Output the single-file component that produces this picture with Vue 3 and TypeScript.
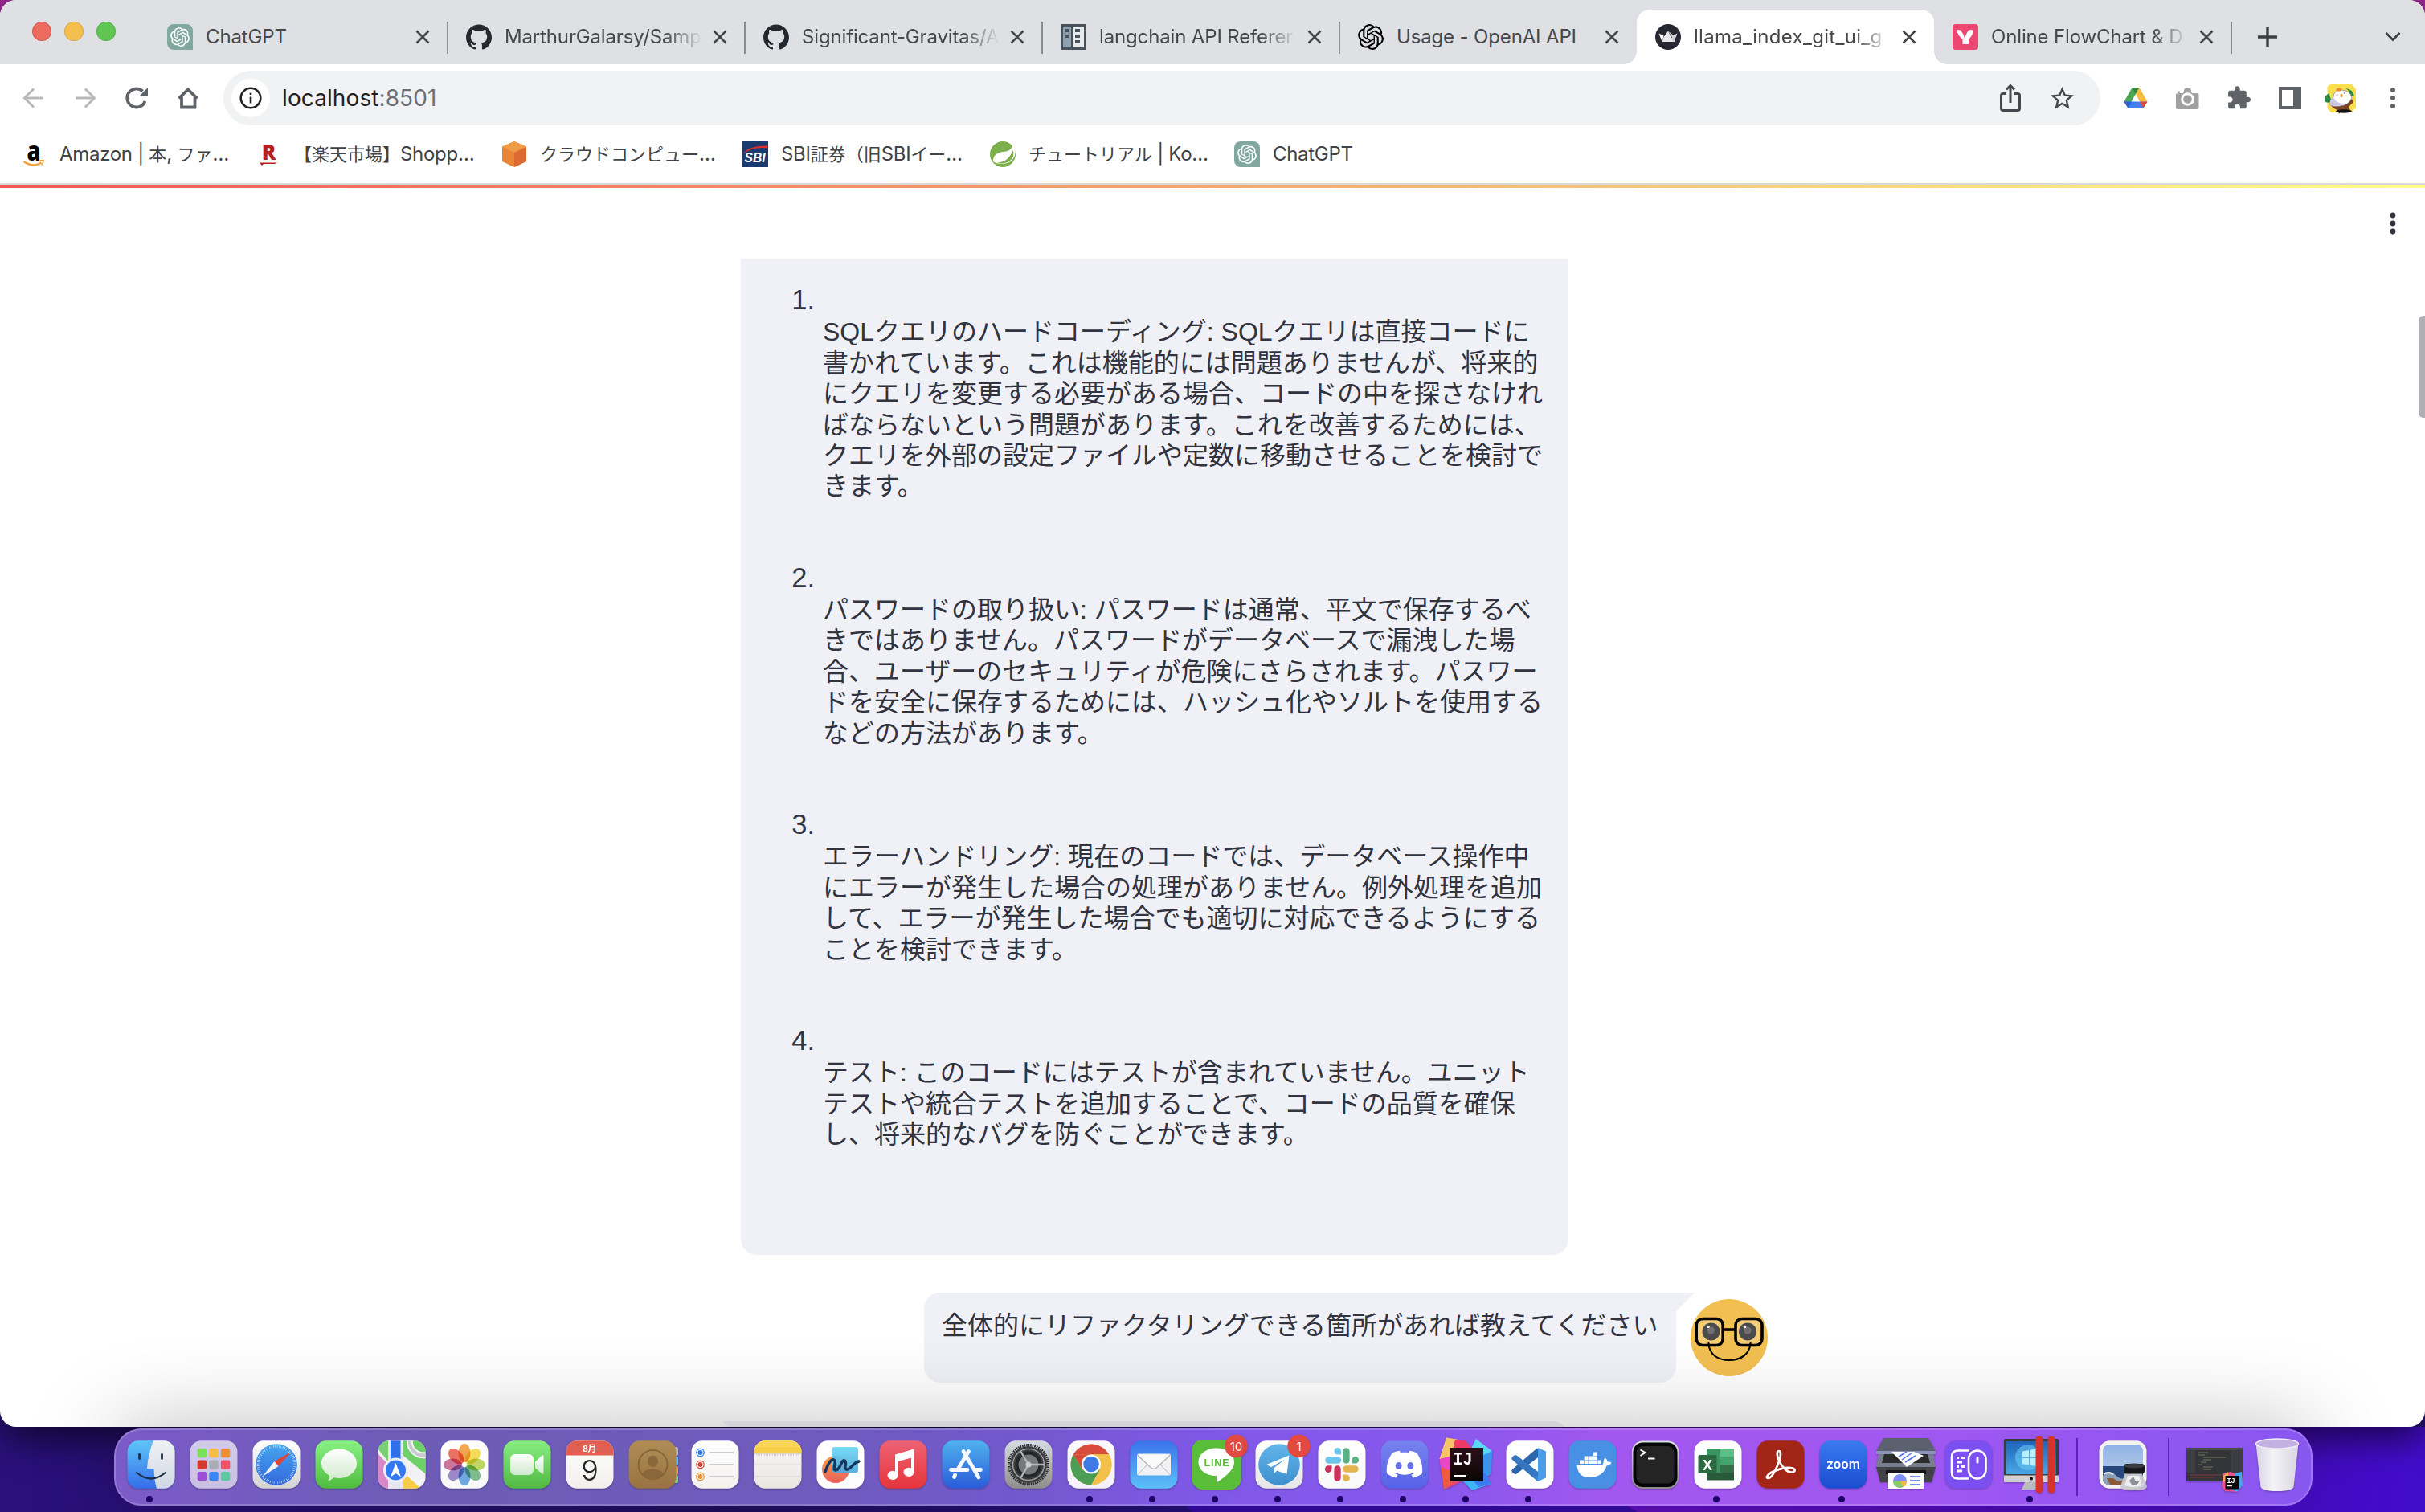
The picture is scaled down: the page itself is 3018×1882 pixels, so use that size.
<script setup lang="ts">
interface Tab {
  title: string
  icon: string
  active?: boolean
  divider?: boolean
  fade?: boolean
  spacing?: string
}
interface LabelPart {
  text: string
  jp?: boolean
}
interface Bookmark {
  icon: string
  parts: LabelPart[]
  width: number
}
interface DockItem {
  name: string
  art: string
  running?: boolean
}

const openai =
  'M22.2819 9.8211a5.9847 5.9847 0 0 0-.5157-4.9108 6.0462 6.0462 0 0 0-6.5098-2.9A6.0651 6.0651 0 0 0 4.9807 4.1818a5.9847 5.9847 0 0 0-3.9977 2.9 6.0462 6.0462 0 0 0 .7427 7.0966 5.98 5.98 0 0 0 .511 4.9107 6.051 6.051 0 0 0 6.5146 2.9001A5.9847 5.9847 0 0 0 13.2599 24a6.0557 6.0557 0 0 0 5.7718-4.2058 5.9894 5.9894 0 0 0 3.9977-2.9001 6.0557 6.0557 0 0 0-.7475-7.0729zm-9.022 12.6081a4.4755 4.4755 0 0 1-2.8764-1.0408l.1419-.0804 4.7783-2.7582a.7948.7948 0 0 0 .3927-.6813v-6.7369l2.02 1.1686a.071.071 0 0 1 .038.052v5.5826a4.504 4.504 0 0 1-4.4945 4.4944zm-9.6607-4.1254a4.4708 4.4708 0 0 1-.5346-3.0137l.142.0852 4.783 2.7582a.7712.7712 0 0 0 .7806 0l5.8428-3.3685v2.3324a.0804.0804 0 0 1-.0332.0615L9.74 19.9502a4.4992 4.4992 0 0 1-6.1408-1.6464zM2.3408 7.8956a4.485 4.485 0 0 1 2.3655-1.9728V11.6a.7664.7664 0 0 0 .3879.6765l5.8144 3.3543-2.0201 1.1685a.0757.0757 0 0 1-.071 0l-4.8303-2.7865A4.504 4.504 0 0 1 2.3408 7.872zm16.5963 3.8558L13.1038 8.364 15.1192 7.2a.0757.0757 0 0 1 .071 0l4.8303 2.7913a4.4944 4.4944 0 0 1-.6765 8.1042v-5.6772a.79.79 0 0 0-.407-.667zm2.0107-3.0231l-.142-.0852-4.7735-2.7818a.7759.7759 0 0 0-.7854 0L9.409 9.2297V6.8974a.0662.0662 0 0 1 .0284-.0615l4.8303-2.7866a4.4992 4.4992 0 0 1 6.6802 4.66zM8.3065 12.863l-2.02-1.1638a.0804.0804 0 0 1-.038-.0567V6.0742a4.4992 4.4992 0 0 1 7.3757-3.4537l-.142.0805L8.704 5.459a.7948.7948 0 0 0-.3927.6813zm1.0976-2.3654l2.602-1.4998 2.6069 1.4998v2.9994l-2.5974 1.4997-2.6067-1.4997Z'
const octocat =
  'M12 .297c-6.63 0-12 5.373-12 12 0 5.303 3.438 9.8 8.205 11.385.6.113.82-.258.82-.577 0-.285-.01-1.04-.015-2.04-3.338.724-4.042-1.61-4.042-1.61C4.422 18.07 3.633 17.7 3.633 17.7c-1.087-.744.084-.729.084-.729 1.205.084 1.838 1.236 1.838 1.236 1.07 1.835 2.809 1.305 3.495.998.108-.776.417-1.305.76-1.605-2.665-.3-5.466-1.332-5.466-5.93 0-1.31.465-2.38 1.235-3.22-.135-.303-.54-1.523.105-3.176 0 0 1.005-.322 3.3 1.23.96-.267 1.98-.399 3-.405 1.02.006 2.04.138 3 .405 2.28-1.552 3.285-1.23 3.285-1.23.645 1.653.24 2.873.12 3.176.765.84 1.23 1.91 1.23 3.22 0 4.61-2.805 5.625-5.475 5.92.42.36.81 1.096.81 2.22 0 1.606-.015 2.896-.015 3.286 0 .315.21.69.825.57C20.565 22.092 24 17.592 24 12.297c0-6.627-5.373-12-12-12'
const discord =
  'M20.317 4.3698a19.7913 19.7913 0 00-4.8851-1.5152.0741.0741 0 00-.0785.0371c-.211.3753-.4447.8648-.6083 1.2495-1.8447-.2762-3.68-.2762-5.4868 0-.1636-.3933-.4058-.8742-.6177-1.2495a.077.077 0 00-.0785-.037 19.7363 19.7363 0 00-4.8852 1.515.0699.0699 0 00-.0321.0277C.5334 9.0458-.319 13.5799.0992 18.0578a.0824.0824 0 00.0312.0561c2.0528 1.5076 4.0413 2.4228 5.9929 3.0294a.0777.0777 0 00.0842-.0276c.4616-.6304.8731-1.2952 1.226-1.9942a.076.076 0 00-.0416-.1057c-.6528-.2476-1.2743-.5495-1.8722-.8923a.077.077 0 01-.0076-.1277c.1258-.0943.2517-.1923.3718-.2914a.0743.0743 0 01.0776-.0105c3.9278 1.7933 8.18 1.7933 12.0614 0a.0739.0739 0 01.0785.0095c.1202.099.246.1981.3728.2924a.077.077 0 01-.0066.1276 12.2986 12.2986 0 01-1.873.8914.0766.0766 0 00-.0407.1067c.3604.698.7719 1.3628 1.225 1.9932a.076.076 0 00.0842.0286c1.961-.6067 3.9495-1.5219 6.0023-3.0294a.077.077 0 00.0313-.0552c.5004-5.177-.8382-9.6739-3.5485-13.6604a.061.061 0 00-.0312-.0286zM8.02 15.3312c-1.1825 0-2.1569-1.0857-2.1569-2.419 0-1.3332.9555-2.4189 2.157-2.4189 1.2108 0 2.1757 1.0952 2.1568 2.419 0 1.3332-.9555 2.4189-2.1569 2.4189zm7.9748 0c-1.1825 0-2.1569-1.0857-2.1569-2.419 0-1.3332.9554-2.4189 2.1569-2.4189 1.2108 0 2.1757 1.0952 2.1568 2.419 0 1.3332-.946 2.4189-2.1568 2.4189Z'

/* 32 x 32 site icons */
const chatgptIcon = `<path d="M8 0H24a8 8 0 0 1 8 8V32H8a8 8 0 0 1-8-8V8a8 8 0 0 1 8-8Z" fill="#80a89d"/><g transform="translate(4 4)"><path d="${openai}" fill="#fff"/></g>`
const githubIcon = `<g transform="scale(1.3333)"><path d="${octocat}" fill="#24292f"/></g>`
const site: Record<string, string> = {
  chatgpt: chatgptIcon,
  github: githubIcon,
  docs: `<rect width="32" height="32" fill="#47525d"/><rect x="3" y="3" width="10" height="26" fill="#8fa0ae"/><rect x="15" y="3" width="14" height="26" fill="#e6eaed"/><g fill="#47525d"><rect x="6" y="6" width="4" height="4"/><rect x="6" y="13" width="4" height="4"/><rect x="18" y="6" width="6" height="4"/><rect x="18" y="13" width="6" height="4"/><rect x="18" y="20" width="6" height="4"/></g>`,
  openai: `<g transform="scale(1.3333)"><path d="${openai}" fill="#000"/></g>`,
  streamlit: `<circle cx="16" cy="16" r="16" fill="#262730"/><path d="M4.500 11.500l6 3L8.500 22z" fill="#fff"/><path d="M27.500 11.500l-6 3L23.500 22z" fill="#d8d8d8"/><path d="M16 8.500l5 8L7.500 22h17L22 13.500z" fill="#cfcfd2"/><path d="M16 8.500L10.500 16l-2 6H22z" fill="#e8e8ea"/>`,
  flow: `<rect width="32" height="32" rx="4" fill="#ec4770"/><path d="M5.500 7.500q3.500-1.500 5.500 1.500 3 3.500 4 9 1.500-5 4-9 2.500-3 6.500-1.500.5 6-5.500 11.500V25h-7.500v-6.500Q6 14 5.500 7.500z" fill="#fff"/>`,
  amazon: `<text x="16" y="23.500" text-anchor="middle" font-family="Open Sans, sans-serif" font-weight="800" font-size="34" textLength="17" lengthAdjust="spacingAndGlyphs" fill="#000">a</text><path d="M3.500 25q11 8 22 1.500" fill="none" stroke="#f2a23a" stroke-width="2.400"/><path d="M22 23.800h6q0 3.500-2.500 5.500" fill="none" stroke="#f2a23a" stroke-width="1.600"/>`,
  rakuten: `<text x="16.500" y="23" text-anchor="middle" font-family="Open Sans, sans-serif" font-weight="800" font-size="26" fill="#b5201c">R</text><path d="M5 26.500H27L24 28H10l-2 2z" fill="#b5201c"/>`,
  aws: `<path d="M16 0L31 6.500V25L16 32 1 25V6.500z" fill="#ea8536"/><path d="M16 0L31 6.500 16 14 1 6.500z" fill="#f09c45"/><path d="M16 14L31 6.500V25L16 32z" fill="#dd6a32"/>`,
  sbi: `<rect width="32" height="32" fill="#1b3a6f"/><path d="M2 14Q10 5 31 5.500v3Q14 6.500 2 15z" fill="#d9302c"/><text x="15.500" y="25.500" text-anchor="middle" font-family="Liberation Sans, sans-serif" font-weight="700" font-style="italic" font-size="16" textLength="26" lengthAdjust="spacingAndGlyphs" fill="#fff">SBI</text>`,
  spring: `<ellipse cx="16" cy="16" rx="16" ry="16" fill="#7db04b"/><path d="M31 6q3 14-7 20-9 4-19 0Q3 24 5 19 9 13.500 17 13q9-1 12-8z" fill="#fff"/><path d="M29 11q2 9-5 14-7 4-15 1.500 8-.5 13-5Q26 17.500 29 11z" fill="#7db04b"/><path d="M29 0q3 4 3 9l-2-3z" fill="#fff"/>`
}

const tabs: Tab[] = [
  { title: 'ChatGPT', icon: 'chatgpt', divider: true },
  { title: 'MarthurGalarsy/Samp', icon: 'github', divider: true, fade: true },
  { title: 'Significant-Gravitas/A', icon: 'github', divider: true, fade: true },
  { title: 'langchain API Referer', icon: 'docs', divider: true, fade: true },
  { title: 'Usage - OpenAI API', icon: 'openai' },
  { title: 'llama_index_git_ui_g', icon: 'streamlit', active: true, fade: true, spacing: '0.3px' },
  { title: 'Online FlowChart & D', icon: 'flow', divider: true, fade: true }
]

const bookmarks: Bookmark[] = [
  { icon: 'amazon', width: 292, parts: [{ text: 'Amazon | ' }, { text: '本', jp: true }, { text: ', ' }, { text: 'ファ', jp: true }, { text: '…' }] },
  { icon: 'rakuten', width: 306, parts: [{ text: '【楽天市場】', jp: true }, { text: 'Shopp…' }] },
  { icon: 'aws', width: 300, parts: [{ text: 'クラウドコンピュー', jp: true }, { text: '…' }] },
  { icon: 'sbi', width: 308, parts: [{ text: 'SBI' }, { text: '証券（旧', jp: true }, { text: 'SBI' }, { text: 'イー', jp: true }, { text: '…' }] },
  { icon: 'spring', width: 304, parts: [{ text: 'チュートリアル', jp: true }, { text: ' | Ko…' }] },
  { icon: 'chatgpt', width: 200, parts: [{ text: 'ChatGPT' }] }
]

const advice: string[][] = [
  [
    'SQLクエリのハードコーディング: SQLクエリは直接コードに',
    '書かれています。これは機能的には問題ありませんが、将来的',
    'にクエリを変更する必要がある場合、コードの中を探さなけれ',
    'ばならないという問題があります。これを改善するためには、',
    'クエリを外部の設定ファイルや定数に移動させることを検討で',
    'きます。'
  ],
  [
    'パスワードの取り扱い: パスワードは通常、平文で保存するべ',
    'きではありません。パスワードがデータベースで漏洩した場',
    '合、ユーザーのセキュリティが危険にさらされます。パスワー',
    'ドを安全に保存するためには、ハッシュ化やソルトを使用する',
    'などの方法があります。'
  ],
  [
    'エラーハンドリング: 現在のコードでは、データベース操作中',
    'にエラーが発生した場合の処理がありません。例外処理を追加',
    'して、エラーが発生した場合でも適切に対応できるようにする',
    'ことを検討できます。'
  ],
  [
    'テスト: このコードにはテストが含まれていません。ユニット',
    'テストや統合テストを追加することで、コードの品質を確保',
    'し、将来的なバグを防ぐことができます。'
  ]
]

/* Dock artwork, each drawn on a 60 x 60 tile */
const grad = (id: string, a: string, b: string) =>
  `<linearGradient id="${id}" x1="0" y1="0" x2="0" y2="1"><stop offset="0" stop-color="${a}"/><stop offset="1" stop-color="${b}"/></linearGradient>`
const tile = (id: string, a: string, b: string) =>
  `${grad(id, a, b)}<rect x=".5" y=".2" width="59" height="59.600" rx="13.500" fill="url(#${id})"/>`
const clip = (id: string) => `<clipPath id="${id}"><rect x=".5" y=".2" width="59" height="59.600" rx="13.500"/></clipPath>`
const badge = (n: string) =>
  `<circle cx="54.500" cy="7" r="14.200" fill="#e2493f"/><text x="54.500" y="12.500" text-anchor="middle" font-family="Inter, sans-serif" font-size="15" fill="#fff">${n}</text>`

const petals = ['#f39a34', '#f5d93b', '#b7d24a', '#67b57c', '#5a9ede', '#8d76c4', '#c75f8f', '#ec5a4c']
  .map((c, i) => `<ellipse cx="30" cy="15.500" rx="7.500" ry="11.500" fill="${c}" opacity=".85" style="mix-blend-mode:multiply" transform="rotate(${i * 45} 30 30)"/>`)
  .join('')
const pads = ['#7be05c', '#f6bd3f', '#ee8f36', '#d33b30', '#a9adb4', '#ef5266', '#9a4fd6', '#3b86f5', '#5cc9a0']
  .map((c, i) => `<rect x="${9.700 + (i % 3) * 14.600}" y="${10 + Math.floor(i / 3) * 14.500}" width="11.400" height="11.200" rx="2.500" fill="${c}"/>`)
  .join('')
const gearTeeth = '<circle cx="30" cy="30" r="24.500" fill="none" stroke="#2b2c2e" stroke-width="3" stroke-dasharray="1.600 1"/>'

const art: Record<string, string> = {
  finder: `${clip('cf')}${grad('fa', '#5ec6f9', '#356dea')}${grad('fb', '#f0f1f3', '#cfd8e4')}<g clip-path="url(#cf)"><rect width="60" height="60" fill="url(#fa)"/><path d="M33 0Q26 18 25 35H33.500Q34 50 37 60H60V0z" fill="url(#fb)"/></g><path d="M15.500 17.500v5M43.500 17.500v5" stroke="#1c2f44" stroke-width="2.800" stroke-linecap="round"/><path d="M12 40Q30 55 48 40" fill="none" stroke="#1c2f44" stroke-width="2.200" stroke-linecap="round"/>`,
  launchpad: `${tile('lp', '#d2cbea', '#c9bfe2')}${pads}`,
  safari: `${tile('sa', '#ffffff', '#d3d3d3')}${grad('sb', '#45a5ee', '#3368dd')}<circle cx="30" cy="30" r="25.800" fill="url(#sb)"/><circle cx="30" cy="30" r="22.800" fill="none" stroke="#fff" stroke-opacity=".75" stroke-width="3" stroke-dasharray=".7 1.690"/><path d="M48.500 14L27.500 26 32.500 32z" fill="#e04437"/><path d="M12.500 45L27.500 26 32.500 32z" fill="#f4f4f4"/>`,
  messages: `${tile('ma', '#89f285', '#50bb3e')}${grad('mb', '#ffffff', '#cfe9ca')}<path d="M30 10.500c12.500 0 22 8 22 18s-9.500 18.500-22 18.500q-3.500 0-6.500-.8-3 3.300-7.500 4 2.500-2.500 2.300-6.500Q8 38.500 8 28.500c0-10 9.500-18 22-18z" fill="url(#mb)"/>`,
  maps: `${clip('cm')}<g clip-path="url(#cm)"><rect width="60" height="60" fill="#f2f1f3"/><path d="M0 0H13V26L0 10z" fill="#79d072"/><path d="M31 0H60V42L31 18z" fill="#6fcf68"/><path d="M0 16L13 30V60H0z" fill="#d987c8"/><path d="M32 60V40L54 60z" fill="#f6cc48"/><path d="M60 18A17 17 0 0 1 40 0" fill="none" stroke="#f3f3f3" stroke-width="8"/><path d="M60 18A17 17 0 0 1 40 0" fill="none" stroke="#c9c9cf" stroke-width="4"/><rect x="13" width="18" height="60" fill="#e6e6ee"/><rect x="16" width="12.500" height="32" fill="#2f6fe9"/></g><circle cx="22.500" cy="37" r="15.500" fill="#eceef5"/><circle cx="22.500" cy="37" r="12.500" fill="#3478f2"/><path d="M22.500 28L29 45.500 22.500 41 16 45.500z" fill="#fff"/>`,
  photos: `${tile('ph', '#ffffff', '#f8f8f8')}${petals}`,
  facetime: `${tile('ft', '#88ee83', '#52b943')}${grad('fv', '#ffffff', '#d0e9cc')}<rect x="9" y="17" width="29" height="26" rx="6" fill="url(#fv)"/><path d="M40 26.500L48 19q2.500-2 2.500 1V40q0 3-2.500 1L40 34z" fill="url(#fv)"/>`,
  calendar: `${clip('cc')}${tile('ca', '#ffffff', '#f1f0ee')}<g clip-path="url(#cc)"><rect width="60" height="18.500" fill="#e15f52"/></g><text x="30" y="14.300" text-anchor="middle" font-family="Liberation Sans, Noto Sans CJK JP, sans-serif" font-weight="700" font-size="11" fill="#fff">8月</text><text x="30" y="50" text-anchor="middle" font-family="Inter, sans-serif" font-weight="300" font-size="36" fill="#222">9</text>`,
  contacts: `<rect x="56" y="8" width="6" height="11" rx="2" fill="#b9b9b9"/><rect x="56" y="20" width="6" height="11" rx="2" fill="#58bdf2"/><rect x="56" y="32" width="6" height="11" rx="2" fill="#f0953c"/><rect x="56" y="43" width="6" height="10" rx="2" fill="#74d86a"/>${tile('co', '#b08d55', '#997341')}<circle cx="30.500" cy="30" r="18" fill="none" stroke="#806036" stroke-width="1.600"/><ellipse cx="30.500" cy="26" rx="6.500" ry="7.200" fill="#8a683b"/><path d="M17 42q3-6.500 13.500-6.500T44 42q-5.500 6-13.500 6T17 42z" fill="#8a683b"/>`,
  reminders: `${tile('re', '#ffffff', '#f2f1ee')}<g fill="none" stroke-width="1.400"><circle cx="11.500" cy="15" r="4.700" stroke="#3b7ef0"/><circle cx="11.500" cy="30" r="4.700" stroke="#de4c41"/><circle cx="11.500" cy="45" r="4.700" stroke="#ec9a3b"/></g><circle cx="11.500" cy="15" r="3" fill="#2f75ee"/><circle cx="11.500" cy="30" r="3" fill="#de4037"/><circle cx="11.500" cy="45" r="3" fill="#ea9030"/><path d="M22.500 15H53M22.500 30H53M22.500 45H53" stroke="#bdbdc2" stroke-width="1.300"/>`,
  notes: `${clip('cn')}${tile('no', '#f9f8f5', '#e7e6e1')}<g clip-path="url(#cn)"><rect width="60" height="15.500" fill="#f8cd48"/><rect width="60" height="8" fill="#fadb67" opacity=".6"/><path d="M0 16H60" stroke="#b9b4a3" stroke-width="1"/></g><path d="M3 18H57" stroke="#b5b2aa" stroke-width="1" stroke-dasharray="1 1"/><path d="M.5 30H59.500M.5 45H59.500" stroke="#d5d4d0" stroke-width="1"/>`,
  freeform: `${tile('fr', '#ffffff', '#fdfdfd')}${grad('fx', '#6fd9f6', '#4aa9dd')}${grad('fy', '#f3a04d', '#ec5f58')}<circle cx="24" cy="36" r="17" fill="url(#fy)"/><rect x="19.500" y="8" width="32.500" height="32" rx="3" fill="url(#fx)" opacity=".93"/><path d="M11 39Q17 22 22 24c4 2-3 13 2 13 6 0 7-14 11-12 4 1-2 11 3 11 5 0 7-8 15-10" fill="none" stroke="#14365c" stroke-width="3.400" stroke-linecap="round"/>`,
  music: `${tile('mu', '#ed6273', '#e6353c')}<path d="M20 17.500L43.500 10.500V39.500a6.500 5.500 0 1 1-3.500-5V21.500L23.500 26V43.500a6.500 5.500 0 1 1-3.500-5z" fill="#fff"/>`,
  appstore: `${tile('as', '#4fb2ee', '#2a5bd8')}<g stroke="#f6f9ff" stroke-width="4.800" stroke-linecap="round"><path d="M33.500 13.500L20 36M27 13.500L46 46M11.500 36.500H32M43 36.500H48.500M16.500 43L15.500 45.500"/></g>`,
  settings: `${tile('se', '#d6dde2', '#8f8d8a')}${gearTeeth}<circle cx="30" cy="30" r="23" fill="#3b3c3e"/><circle cx="30" cy="30" r="19.500" fill="none" stroke="#9c9da0" stroke-width="1.500"/><circle cx="30" cy="30" r="14.500" fill="#77787b" stroke="#242527" stroke-width="4"/><g stroke="#b5b6b9" stroke-width="2.400"><path d="M30 30L20 13M30 30H50M30 30L20 47"/></g><circle cx="30" cy="30" r="3.500" fill="#c8c9cc"/>`,
  chrome: `${tile('ch', '#fbf9ff', '#f5f1fb')}<circle cx="30" cy="30" r="25.500" fill="#f3c04a"/><path d="M7.900 17.250A25.500 25.500 0 0 1 52.100 17.250H30z" fill="#d94b3c"/><path d="M7.900 17.250A25.500 25.500 0 0 0 30 55.500L41 36.400 19 36.400z" fill="#4d9e55"/><path d="M7.900 17.250L19 36.400 30 17.250z" fill="#d94b3c"/><path d="M52.100 17.250A25.500 25.500 0 0 1 30 55.500L41 36.400 30 17.250z" fill="#f3c04a"/><circle cx="30" cy="29.500" r="12" fill="#fff"/><circle cx="30" cy="29.500" r="9.800" fill="#3f7be4"/>`,
  mail: `${tile('ml', '#3b72ea', '#5cc0f8')}<rect x="9" y="16.500" width="42" height="27" rx="2.500" fill="#f2f2f4"/><path d="M10 42.500L24 28M50 42.500L36 28" stroke="#b5b6bb" stroke-width="1"/><path d="M9.500 18L26 33.500q4 3.500 8 0L50.500 18" fill="#fafafa" stroke="#aeb0b5" stroke-width="1.200"/>`,
  line: `<rect x="-.8" y="-1" width="61.600" height="62" rx="13.500" fill="#59bd39"/><path d="M30 9.500c13 0 22 7.500 22 17.500 0 9-8 15.500-20.500 24.500-2 1-1.500-2-1.500-7.500C17 44 7.500 37 7.500 27S17 9.500 30 9.500z" fill="#fff"/><text x="30" y="31.500" text-anchor="middle" font-family="Liberation Sans, sans-serif" font-weight="700" font-size="12.500" textLength="31" fill="#59bd39">LINE</text>${badge('10')}`,
  telegram: `${tile('te', '#ffffff', '#e6e6e8')}${grad('tf', '#62b4ea', '#3d90cc')}<circle cx="30" cy="30" r="25.800" fill="url(#tf)"/><path d="M14 30L42.500 18.500 39.500 42 27 37.500 23.500 41.500 23 34.500 37 23.500 20 33z" fill="#fff"/>${badge('1')}`,
  slack: `${tile('sl', '#ffffff', '#f8f8f8')}<g stroke-width="8.300" stroke-linecap="round"><path d="M13.500 24.500H25" stroke="#6cc5ea"/><path d="M35.500 13.500V24.500" stroke="#5bb285"/><path d="M24.500 35.500V46.500" stroke="#cd3159"/><path d="M35.500 35.500H46.500" stroke="#e3b54c"/></g><path d="M29 17.500V13.200a4.200 4.200 0 1 0-4.200 4.300z" fill="#6cc5ea"/><path d="M42.500 28.500h4.200a4.300 4.300 0 1 0-4.200-4.200z" fill="#5bb285"/><path d="M17.500 31.300h-4.200a4.300 4.300 0 1 0 4.200 4.200z" fill="#cd3159"/><path d="M31.300 42.500v4.200a4.300 4.300 0 1 0 4.200-4.200z" fill="#e3b54c"/>`,
  discord: `${tile('di', '#7782ee', '#5663e8')}<g transform="translate(7.800 7.500) scale(1.850)"><path d="${discord}" fill="#fff"/></g>`,
  idea: `<path d="M4-3.500L19-1 30 6 18 28 -2 32 1 24-4.500 23z" fill="#f08ad0"/><path d="M4-3.500L19-1 8 20-4.500 23z" fill="#f6c26a"/><path d="M15-1L27-.500 36 10 12 12z" fill="#ee3b63"/><path d="M41-2L61 13 48 30 34 12z" fill="#5bd6f3"/><path d="M61 13L60 42 48 48 46 20z" fill="#3c93ee"/><path d="M-4.500 23L8 20 12 44-3 35z" fill="#e847c4"/><path d="M-3 33L10 38 12 54 1 61z" fill="#ee5a3c"/><path d="M2 61L14 49H26z" fill="#f0466a"/><path d="M22 48H50L60 54 36 62z" fill="#3fb4f2"/><path d="M36 48L52 40 60 54 44 58z" fill="#3a7cf0"/>${grad('ij', '#2c1018', '#0a0606')}<rect x="8.500" y="9" width="41.500" height="42" fill="url(#ij)"/><text x="12.500" y="29.500" font-family="Liberation Mono, monospace" font-weight="700" font-size="22" textLength="24" lengthAdjust="spacingAndGlyphs" fill="#fff">IJ</text><rect x="13.500" y="43" width="15.500" height="3" fill="#fff"/>`,
  vscode: `${tile('vs', '#ffffff', '#fdfdfd')}<path d="M39 9.500L8 36q-1.500 2 0 3.500l2.500 2q1.500 1 3 0L44 18z" fill="#2b66ad"/><path d="M39 50.500L8 24q-1.500-2 0-3.500l2.500-2q1.500-1 3 0L44 42z" fill="#3576bf"/><path d="M40 9L50 13.500V46.500L40 51z" fill="#4a9be8"/><path d="M40 9V51L33 44.500H40z" fill="#3c87d6"/>`,
  docker: `<rect x=".5" y=".2" width="59" height="59.600" rx="13.500" fill="#4790e4"/><g fill="#fff"><rect x="14" y="24.500" width="5" height="4.500"/><rect x="19.600" y="24.500" width="5" height="4.500"/><rect x="25.200" y="24.500" width="5" height="4.500"/><rect x="30.800" y="24.500" width="5" height="4.500"/><rect x="36.400" y="24.500" width="4" height="4.500"/><rect x="19.600" y="19.500" width="5" height="4.500"/><rect x="25.200" y="19.500" width="5" height="4.500"/><rect x="30.800" y="19.500" width="5" height="4.500"/><rect x="30.800" y="14.500" width="5" height="4.500"/><path d="M10.500 30H42q2-1 1.500-4 .5-3 2-4.500 3 2 3 5 3-.5 5 1-1.500 3.500-6 4Q43 46 25.500 46q-14 0-15-16z"/></g>`,
  terminal: `${grad('tm', '#d9e0e6', '#8b8a88')}<rect x=".8" y=".5" width="58.500" height="59.500" rx="13.500" fill="url(#tm)"/><rect x="2.500" y="2.500" width="55" height="55.500" rx="12" fill="#050505"/><rect x="6.500" y="7" width="47" height="46.500" rx="8" fill="#242424"/><path d="M11.500 11.500L17.500 15 11.500 19" fill="none" stroke="#fff" stroke-width="2"/><path d="M21 22.500H29.500" stroke="#fff" stroke-width="2"/>`,
  excel: `${tile('ex', '#ffffff', '#fbfbfb')}<rect x="16" y="10" width="34" height="39" rx="2" fill="#3b9461"/><rect x="33" y="10" width="17" height="10" fill="#5cbf86"/><rect x="33" y="20" width="17" height="10" fill="#45a36e"/><rect x="33" y="30" width="17" height="10" fill="#336f49"/><rect x="16" y="40" width="34" height="9.500" fill="#285a39"/><rect x="5.500" y="18" width="23" height="23" rx="2" fill="#2c6b42"/><text x="17" y="36.500" text-anchor="middle" font-family="Liberation Sans, sans-serif" font-weight="700" font-size="18" fill="#fff">X</text>`,
  acrobat: `<rect x=".5" y=".2" width="59" height="59.600" rx="13.500" fill="#a22518"/><path d="M28 13c-3.500 0-2.500 7 0 12 3 6.500 9 14.500 16 14.500 5 0 5-5-1-5.500-8-1-17 2-24 5.500-6.500 3.500-7.500 7.500-4.500 7.500 5.500 0 11-14 14-22 1.500-4.500 2.500-12-.5-12z" fill="none" stroke="#fff" stroke-width="2.700"/>`,
  zoom: `${tile('zo', '#3a7af0', '#1b4cd0')}<text x="30" y="34.500" text-anchor="middle" font-family="Inter, sans-serif" font-weight="600" font-size="16.500" textLength="42" lengthAdjust="spacingAndGlyphs" fill="#fff">zoom</text>`,
  scanner: `<path d="M2-3H58L67 13H-7z" fill="#5c6170"/><path d="M-7 13H67V17H-7z" fill="#8b93b8"/><path d="M-4 17H64L67 33H-7z" fill="#777d8d"/><path d="M3 17H57L60 28H0z" fill="#2a2b2d"/><path d="M-7 33H67L62 52H-2z" fill="#404246"/><rect x="5" y="37" width="50" height="5" fill="#151617"/><path d="M12 14H40L52 19 31 33z" fill="#fff"/><path d="M21 20L31 14M25 24L38 15M29 27L42 19" stroke="#4a6fe8" stroke-width="1.500"/><rect x="8" y="40" width="44" height="20" fill="#fff"/><circle cx="22.500" cy="50.500" r="8.500" fill="#7d8ff2"/><path d="M22.500 50.500H31A8.500 8.500 0 0 1 26 58z" fill="#f5b83f"/><path d="M22.500 50.500L26 58A8.500 8.500 0 0 1 14 50.500z" fill="#86cf62"/><path d="M35 45H48M35 50H48M35 55H48" stroke="#4a6fe8" stroke-width="1.600"/>`,
  remote: `<rect x=".5" y=".2" width="59" height="59.600" rx="13.500" fill="#7b4ff0"/><g fill="none" stroke="#fff" stroke-width="2.600"><path d="M31 12.500H17Q9 12.500 9 20V40Q9 47.500 17 47.500H31"/><rect x="30" y="12.500" width="21.500" height="35" rx="10.700"/><path d="M41 21.500V27" stroke-linecap="round" stroke-width="3"/></g><path d="M15 21.500H18M21 21.500H25M15 27H22M15 32.500H18M21 32.500H25M15 38H22" stroke="#fff" stroke-width="3"/>`,
  parallels: `${grad('pa', '#1f63b8', '#4aa7e6')}<rect x="-4" y="-2" width="68" height="46" rx="1.500" fill="#3a3c3f"/><rect x="-1.500" y="1" width="62" height="41" fill="url(#pa)"/><circle cx="26" cy="21" r="16" fill="#6fd0f2" opacity=".55"/><path d="M19 13.500L27 12V20.500H19zM28.500 11.800L37 10.500V20.500H28.500zM19 22H27V30.500L19 29zM28.500 22H37V32L28.500 30.700z" fill="#b8f0fc"/><rect x="-4" y="43.500" width="68" height="8.500" fill="#cfd0d3"/><circle cx="30" cy="47.500" r="2" fill="#111"/><path d="M22 52H40L42 61H18z" fill="#b9bbbf"/><rect x="35.500" y="-5.500" width="9" height="71" rx="4.500" fill="#d6342b"/><rect x="50.500" y="-5.500" width="9" height="71" rx="4.500" fill="#d6342b"/>`,
  preview: `${clip('cp')}${grad('pv', '#8fb2e4', '#c2d2ea')}<rect x=".5" y=".2" width="59" height="59.600" rx="13" fill="#f4f3f0"/><rect x="5" y="5" width="50" height="50" rx="8" fill="url(#pv)"/><path d="M5 32H55V47Q55 55 47 55H13Q5 55 5 47z" fill="#27477c"/><path d="M5 44Q14 36 22 44T40 42 55 46V47Q55 55 47 55H13Q5 55 5 47z" fill="#8ba2b8"/><path d="M10 47h8l6 4 8-2 4 6H14z" fill="#8a5a38"/><path d="M6 42q6-4 12 0" stroke="#fff" stroke-width="2" fill="none"/><path d="M33 40H53L60 57Q60 62 44 62 26 62 27 57z" fill="#c9cbd0" opacity=".93"/><path d="M36 44H50L54 56Q44 60 32 56z" fill="#ecedf0"/><path d="M38 50l5-5 3 6 5-1-4 6-6-1z" fill="#8d9096"/><rect x="31" y="29" width="26" height="12.500" rx="4" fill="#17181a"/><ellipse cx="44" cy="31.500" rx="12.500" ry="3" fill="#3b3c3f"/>`,
  minimized: `<rect x="-5" y="9" width="70" height="42" fill="#333538"/><rect x="-5" y="9" width="70" height="3" fill="#46484b"/><rect x="-5" y="12" width="11" height="29" fill="#3d4043"/><rect x="51" y="12" width="14" height="29" fill="#3a3d42"/><path d="M10 15H22M10 18H18M16 21H44M16 24H26M13 27H20M10 30H15M16 33H28M16 36H26" stroke="#77785a" stroke-width="1"/><path d="M-1 43H40M-1 46H30" stroke="#7c3c3a" stroke-width="1"/><path d="M41 41L50 39 58 42 64 39 65 55 58 64 43 63 39 57z" fill="#e9508d"/><path d="M56 41L64 39 65 56 58 64 50 60z" fill="#3ea7f0"/><path d="M40 45L47 39 48 50 41 52z" fill="#f5a95a"/><rect x="43.500" y="44" width="17" height="16.500" fill="#0b0608"/><text x="45.500" y="52.500" font-family="Liberation Mono, monospace" font-weight="700" font-size="8.500" fill="#fff">IJ</text><rect x="46" y="56" width="6" height="1.200" fill="#fff"/>`,
  trash: `<linearGradient id="tr" x1="0" y1="0" x2="1" y2="0"><stop offset="0" stop-color="#d8d2e4"/><stop offset=".4" stop-color="#f4f3f6"/><stop offset="1" stop-color="#d9d5e2"/></linearGradient><path d="M3.500 3.500L9.500 58Q12 63 30 63T50.500 58L56.500 3.500z" fill="url(#tr)"/><ellipse cx="30" cy="4" rx="26.500" ry="6" fill="#c3b1e4" stroke="#f1eef8" stroke-width="1.500"/>`
}

const apps: DockItem[] = [
  { name: 'finder', art: art.finder, running: true },
  ...['launchpad', 'safari', 'messages', 'maps', 'photos', 'facetime', 'calendar', 'contacts', 'reminders', 'notes', 'freeform', 'music', 'appstore', 'settings'].map((n) => ({ name: n, art: art[n] })),
  ...['chrome', 'mail', 'line', 'telegram', 'slack', 'discord', 'idea', 'vscode'].map((n) => ({ name: n, art: art[n], running: true })),
  { name: 'docker', art: art.docker },
  { name: 'terminal', art: art.terminal },
  { name: 'excel', art: art.excel, running: true },
  { name: 'acrobat', art: art.acrobat },
  { name: 'zoom', art: art.zoom, running: true },
  { name: 'scanner', art: art.scanner },
  { name: 'remote', art: art.remote },
  { name: 'parallels', art: art.parallels, running: true }
]
const recent: DockItem[] = [{ name: 'preview', art: art.preview }]
const shelf: DockItem[] = [
  { name: 'minimized', art: art.minimized },
  { name: 'trash', art: art.trash }
]
const dockGroups = [apps, recent, shelf]
</script>

<template>
  <div class="desktop">
    <svg class="wallpaper" width="3018" height="1882" viewBox="0 0 3018 1882">
      <defs>
        <linearGradient id="wall" x1="0" x2="1">
          <stop offset="0" stop-color="#2b107c" />
          <stop offset=".3" stop-color="#200f62" />
          <stop offset=".48" stop-color="#25107c" />
          <stop offset="1" stop-color="#25107c" />
        </linearGradient>
        <linearGradient id="wall2" x1="0" x2="1">
          <stop offset="0" stop-color="#6a10c4" />
          <stop offset=".6" stop-color="#4e0bc0" />
          <stop offset="1" stop-color="#430ccb" />
        </linearGradient>
      </defs>
      <rect width="3018" height="1882" fill="url(#wall)" />
      <path d="M1370 1776H3018V1882H1484z" fill="#360ba8" />
      <path d="M1850 1776H3018V1882H2038z" fill="url(#wall2)" />
      <rect width="3018" height="60" fill="#9a2a92" />
    </svg>

    <main class="window">
      <header class="tabstrip">
        <div class="lights"><i class="red" /><i class="amber" /><i class="green" /></div>
        <div v-for="tab in tabs" :key="tab.title" class="tab" :class="{ active: tab.active, divider: tab.divider }">
          <svg class="favicon" viewBox="0 0 32 32" v-html="site[tab.icon]" />
          <span class="title" :class="{ fade: tab.fade }" :style="{ letterSpacing: tab.spacing }">{{ tab.title }}</span>
          <svg class="close" viewBox="0 0 18 18"><path d="M1.500 1.500l15 15M16.500 1.500l-15 15" /></svg>
        </div>
        <svg class="plus" viewBox="0 0 26 26"><path d="M13 1v24M1 13h24" /></svg>
        <svg class="more-tabs" viewBox="0 0 20 14"><path d="M1.500 2l8.500 8.500L18.500 2" /></svg>
      </header>

      <div class="toolbar">
        <svg class="tool dim" viewBox="0 0 32 32"><path d="M28 16H5M16 4.500L4.500 16 16 27.500" /></svg>
        <svg class="tool dim" viewBox="0 0 32 32"><path d="M4 16H27M16 4.500L27.500 16 16 27.500" /></svg>
        <svg class="tool dark" viewBox="0 0 32 32">
          <path d="M26.500 20A11.500 11.500 0 1 1 23.500 7.500" /><path class="solid" d="M30 3V14H19z" />
        </svg>
        <svg class="tool dark" viewBox="0 0 32 32"><path d="M4.500 16.500L16 5.500 27.500 16.500M8 14.500V27.500H24.500V14.500" /></svg>
        <div class="omnibox">
          <span class="info">
            <svg viewBox="0 0 28 28"><circle cx="14" cy="14" r="12.300" /><path d="M14 12.500V20.500M14 7.500V10" /></svg>
          </span>
          <span class="url">localhost<span class="port">:8501</span></span>
          <svg class="tool share" viewBox="0 0 32 36">
            <path d="M11 12.500H7q-2.500 0-2.500 2.500V31q0 2.500 2.500 2.500H25q2.500 0 2.500-2.500V15q0-2.500-2.500-2.500H21M16 24V3M11 7.500L16 2.500 21 7.500" />
          </svg>
          <svg class="tool star" viewBox="0 0 24 24">
            <path d="M22 9.240l-7.190-.62L12 2 9.190 8.630 2 9.240l5.460 4.730L5.820 21 12 17.270 18.180 21l-1.630-7.030L22 9.240zM12 15.400l-3.760 2.270 1-4.280-3.320-2.880 4.380-.38L12 6.100l1.710 4.040 4.380.38-3.320 2.880 1 4.280L12 15.400z" />
          </svg>
        </div>
        <svg class="ext" viewBox="0 0 32 32">
          <path d="M11.500 3H20.500L16 11 6 28 1.500 20.500z" fill="#4aa853" /><path d="M11.500 3H20.500L16 11z" fill="#35803c" />
          <path d="M20.500 3L30.500 20.500H21L16 11z" fill="#f6bd41" />
          <path d="M1.500 20.500H30.500L25.500 28.500H6.500z" fill="#4280f0" /><path d="M1.500 20.500H11L6.500 28.500z" fill="#2d62d6" /><path d="M21 20.500H30.500L25.500 28.500z" fill="#dd4b3c" />
        </svg>
        <svg class="ext" viewBox="0 0 32 32">
          <path d="M4 7.500H7V10H11L13 4H20L22 10H28.500Q30.500 10 30.500 12V28Q30.500 30 28.500 30H4Q2 30 2 28V12Q2 10 4 10z" fill="#a0a0a0" />
          <circle cx="16.500" cy="17.500" r="6.800" fill="#a0a0a0" stroke="#fff" stroke-width="3" />
        </svg>
        <svg class="ext" viewBox="0 0 24 24">
          <path transform="translate(.3 0)" fill="#5f6368" d="M20.500 11H19V7c0-1.100-.9-2-2-2h-4V3.500C13 2.120 11.880 1 10.500 1S8 2.120 8 3.500V5H4c-1.100 0-1.990.9-1.990 2v3.800H3.500c1.490 0 2.700 1.210 2.700 2.700s-1.210 2.700-2.700 2.700H2V20c0 1.100.9 2 2 2h3.800v-1.500c0-1.490 1.210-2.700 2.700-2.700 1.490 0 2.700 1.210 2.700 2.700V22H17c1.100 0 2-.9 2-2v-4h1.500c1.380 0 2.500-1.120 2.500-2.500S21.880 11 20.500 11z" />
        </svg>
        <svg class="ext" viewBox="0 0 32 32"><path d="M2 2H30V30H2z" fill="#5f6368" /><path d="M6 6H20V26H6z" fill="#fff" /></svg>
        <svg class="ext" viewBox="0 0 32 32">
          <path d="M3-2H28L34 5V28L28 34H3L-1.500 29V2z" fill="#f9df4b" />
          <path d="M-5 20Q-5 12 1 10 1 17 6 19-1 24-5 20z" fill="#2f8a45" /><path d="M21 4Q31 5 32 14L26 13Q28 8 21 4z" fill="#2f8a45" />
          <path d="M2 24Q18 28 29 17L31 21 25 27 28 33 22 31 15 32 13 36 11 31Q5 29 2 24z" fill="#7a4423" />
          <ellipse cx="19" cy="32.500" rx="10" ry="2.200" fill="#111" />
          <path d="M2 25Q1 18 6 15 6 7 15 6 27 6 29 16 25 25 14 26 6 27 2 25z" fill="#fff" stroke="#8f8bb0" stroke-width=".8" />
          <path d="M2 25Q1 18 6 15 9 23 20 23 14 27 2 25z" fill="#cdc9e8" />
          <ellipse cx="13" cy="5.500" rx="3.500" ry="2" fill="#ef8a35" /><ellipse cx="16" cy="13" rx="1.600" ry="2.200" fill="#f0a030" />
          <circle cx="10.500" cy="12" r=".8" fill="#222" /><circle cx="20" cy="10" r=".8" fill="#222" />
        </svg>
        <svg class="ext" viewBox="0 0 32 32"><g fill="#5f6368"><circle cx="16" cy="6" r="3" /><circle cx="16" cy="16" r="3" /><circle cx="16" cy="26" r="3" /></g></svg>
      </div>

      <nav class="bookmarks">
        <a v-for="mark in bookmarks" :key="mark.icon" class="bookmark" :style="{ width: mark.width + 'px' }">
          <svg class="favicon" viewBox="0 0 32 32" v-html="site[mark.icon]" />
          <span class="label"><span v-for="(part, i) in mark.parts" :key="i" :class="{ jp: part.jp }">{{ part.text }}</span></span>
        </a>
      </nav>

      <section class="page" lang="ja">
        <svg class="page-menu" viewBox="0 0 8 28"><g fill="#31333f"><circle cx="4" cy="4" r="3.400" /><circle cx="4" cy="14" r="3.400" /><circle cx="4" cy="24" r="3.400" /></g></svg>
        <i class="thumb" />

        <article class="reply">
          <div v-for="(lines, n) in advice" :key="n" class="item">
            <span class="number">{{ n + 1 }}.</span>
            <p v-for="line in lines" :key="line">{{ line }}</p>
          </div>
        </article>

        <div class="question-row">
          <p class="question">全体的にリファクタリングできる箇所があれば教えてください<i class="tail" /></p>
          <svg class="avatar" viewBox="0 0 96 96">
            <circle cx="48" cy="48" r="48" fill="#f2bf52" />
            <g fill="#f6cd77" stroke="#000" stroke-width="3.600"><rect x="7.200" y="24.500" width="33" height="33" rx="8" /><rect x="56" y="24.500" width="33" height="33" rx="8" /></g>
            <path d="M40 38H56" stroke="#000" stroke-width="3.600" />
            <g fill="#4b4b4b"><circle cx="25.500" cy="40.500" r="11" /><circle cx="71" cy="40.500" r="11" /></g>
            <g fill="#707070"><circle cx="25.500" cy="39" r="4.500" /><circle cx="71" cy="39" r="4.500" /></g>
            <g fill="#fff"><circle cx="22" cy="34.500" r="1.800" /><circle cx="67.500" cy="34.500" r="1.800" /></g>
            <path d="M22.500 55C23 69 34 76 48 76S73.500 69 74.500 55" fill="none" stroke="#000" stroke-width="2.200" stroke-linecap="round" />
          </svg>
        </div>

        <div class="next-reply"><i class="tail" /></div>
      </section>
    </main>

    <footer class="dock">
      <template v-for="(group, g) in dockGroups" :key="g">
        <i v-if="g > 0" class="separator" />
        <div v-for="app in group" :key="app.name" class="app">
          <svg class="art" viewBox="0 0 60 60" v-html="app.art" />
          <i v-if="app.running" class="running" />
        </div>
      </template>
    </footer>
  </div>
</template>

<style>
html,
body {
  margin: 0;
  overflow: hidden;
}
</style>

<style scoped>
.desktop {
  position: relative;
  width: 3018px;
  height: 1882px;
  overflow: hidden;
  font-family: Inter, 'Noto Sans CJK JP', sans-serif;
  text-spacing-trim: space-all;
}
.wallpaper {
  position: absolute;
  inset: 0;
}
.window {
  position: relative;
  display: flex;
  flex-direction: column;
  height: 1776px;
  border-radius: 20px;
  overflow: hidden;
  background: #fff;
  box-shadow: 0 16px 44px rgba(0, 0, 0, 0.6);
}

/* Tab strip */
.tabstrip {
  display: flex;
  align-items: center;
  box-sizing: border-box;
  height: 80px;
  padding-top: 12px;
  background: #dfe0e4;
}
.lights {
  display: flex;
  gap: 16px;
  width: 145px;
  height: 24px;
  padding-left: 40px;
  margin-top: -14px;
}
.lights i {
  box-sizing: border-box;
  width: 24px;
  height: 24px;
  border-radius: 50%;
  border: 1px solid rgba(0, 0, 0, 0.12);
}
.red { background: #ed6a5e; }
.amber { background: #f5bf4f; }
.green { background: #61c554; }
.tab {
  position: relative;
  display: flex;
  align-items: center;
  box-sizing: border-box;
  width: 370px;
  height: 68px;
  padding: 0 22px 0 23px;
}
.lights + .tab { width: 372px; }
.favicon {
  flex: none;
  width: 32px;
  height: 32px;
  overflow: visible;
}
.title {
  flex: 1;
  min-width: 0;
  margin: 0 13px 0 16px;
  white-space: nowrap;
  font-size: 24px;
  line-height: 32px;
  letter-spacing: -0.15px;
  color: #45474a;
}
.fade {
  mask-image: linear-gradient(90deg, #000 calc(100% - 46px), transparent 100%);
}
.close {
  flex: none;
  width: 18px;
  height: 18px;
  fill: none;
  stroke: #45474a;
  stroke-width: 2.6;
}
.divider::after {
  content: '';
  position: absolute;
  right: -1px;
  top: 15px;
  width: 2px;
  height: 40px;
  background: #8b8d91;
}
.active {
  background: #fff;
  border-radius: 16px 16px 0 0;
}
.active::before,
.active::after {
  content: '';
  position: absolute;
  bottom: 0;
  width: 16px;
  height: 16px;
}
.active::before {
  left: -16px;
  background: radial-gradient(circle at 0 0, transparent 15.5px, #fff 16px);
}
.active::after {
  right: -16px;
  background: radial-gradient(circle at 100% 0, transparent 15.5px, #fff 16px);
}
.plus {
  width: 26px;
  height: 26px;
  margin-left: 32px;
  fill: none;
  stroke: #3c3e41;
  stroke-width: 3.4;
}
.more-tabs {
  width: 20px;
  height: 14px;
  margin-left: auto;
  margin-right: 30px;
  fill: none;
  stroke: #3c3e41;
  stroke-width: 2.8;
}

/* Toolbar */
.toolbar {
  display: flex;
  align-items: center;
  gap: 32px;
  height: 84px;
  padding-left: 26px;
}
.tool {
  width: 32px;
  height: 32px;
  fill: none;
  stroke-width: 3;
}
.dim { stroke: #b8b9bb; }
.dark { stroke: #5f6368; stroke-width: 3.8; }
.dark .solid { fill: #5f6368; stroke: none; }
.omnibox {
  display: flex;
  align-items: center;
  box-sizing: border-box;
  width: 2336px;
  height: 68px;
  margin: 0 -4px;
  padding: 0 32px 0 10px;
  border-radius: 34px;
  background: #f1f2f4;
}
.info {
  display: flex;
  align-items: center;
  justify-content: center;
  width: 48px;
  height: 48px;
  border-radius: 50%;
  background: #fff;
}
.info svg {
  width: 28px;
  height: 28px;
  fill: none;
  stroke: #202124;
  stroke-width: 2.6;
}
.url {
  margin-left: 15px;
  margin-right: auto;
  font-size: 28px;
  line-height: 36px;
  letter-spacing: 0.1px;
  color: #202124;
}
.port { color: #6c6f73; }
.share {
  height: 36px;
  margin-right: 31px;
  stroke: #44474b;
}
.star {
  width: 35px;
  height: 35px;
  margin-right: -2px;
  fill: #44474b;
}
.ext {
  width: 32px;
  height: 32px;
  overflow: visible;
}

/* Bookmarks bar */
.bookmarks {
  display: flex;
  align-items: center;
  height: 56px;
  padding: 0 0 8px 26px;
  border-bottom: 2px solid #d9d9da;
}
.bookmark {
  display: flex;
  align-items: center;
  white-space: nowrap;
}
.label {
  margin-left: 16px;
  font-size: 24px;
  line-height: 32px;
  letter-spacing: -0.3px;
  white-space: pre;
  color: #414347;
}
.jp {
  font-size: 22px;
  letter-spacing: 0;
}

/* Page */
.page {
  position: relative;
  flex: 1;
  border-top: 4px solid;
  border-image: linear-gradient(90deg, #ec5b51, #f5a86c 50%, #fffc8c) 1;
  overflow: hidden;
  font-family: 'Liberation Sans', 'Noto Sans CJK JP', sans-serif;
  font-size: 32px;
  line-height: 38.4px;
  color: #31333f;
}
.page p { margin: 0; white-space: nowrap; }
.page-menu {
  position: absolute;
  top: 30px;
  right: 36px;
  width: 8px;
  height: 28px;
}
.thumb {
  position: absolute;
  top: 159px;
  right: 0;
  width: 8px;
  height: 127px;
  border-radius: 6px 0 0 6px;
  background: #b0afb3;
}
.reply {
  box-sizing: border-box;
  width: 1030px;
  height: 1240px;
  margin: 88px 0 0 922px;
  padding: 34px 0 0 102px;
  border-radius: 0 0 20px 20px;
  background: #f0f1f6;
}
.item {
  display: flex;
  flex-direction: column;
  padding-bottom: 76.8px;
}
.number {
  width: 61px;
  margin: -2px 0 2px -71px;
  text-align: right;
  font-size: 34.5px;
}
.question-row {
  display: flex;
  align-items: flex-start;
  margin: 47px 0 0 1150px;
}
.page .question {
  position: relative;
  box-sizing: border-box;
  width: 936px;
  height: 112px;
  padding: 22px 0 0 22px;
  border-radius: 20px 0 20px 20px;
  background: #f0f1f6;
}
.tail {
  position: absolute;
  top: 0;
  width: 23px;
  height: 23px;
  background: #f0f1f6;
}
.question .tail {
  left: 100%;
  clip-path: polygon(0 0, 100% 0, 0 100%);
}
.avatar {
  width: 96px;
  height: 96px;
  margin: 8px 0 0 18px;
}
.next-reply {
  position: relative;
  width: 1030px;
  height: 200px;
  margin: 48px 0 0 922px;
  border-radius: 0 20px 20px 20px;
  background: #f0f1f6;
}
.next-reply .tail {
  right: 100%;
  clip-path: polygon(0 0, 100% 0, 100% 100%);
}

/* Dock */
.dock {
  position: relative;
  display: flex;
  box-sizing: border-box;
  width: 2736px;
  height: 96px;
  margin: 2px 0 0 142px;
  padding-left: 4.5px;
  border: 2px solid rgba(255, 255, 255, 0.2);
  border-radius: 34px;
  background: linear-gradient(90deg, #7b5bc8 0%, #6d5cb6 14%, #6e5bbd 32%, #7458cf 42%, #8058e8 50%, #8758ec 60%, #a257f0 68%, #a357f1 80%, #9656f1 90%, #8857f0 100%) border-box;
  box-shadow: 0 0 110px rgba(0, 0, 0, 0.28);
}
.app {
  display: flex;
  flex-direction: column;
  align-items: center;
  width: 78px;
  padding-top: 13px;
}
.art {
  width: 60px;
  height: 60px;
  overflow: visible;
  filter: drop-shadow(0 1px 1px rgba(0, 0, 0, 0.25));
}
.running {
  width: 8px;
  height: 8px;
  margin: 9px 3px 0 0;
  border-radius: 50%;
  background: #1c0068;
}
.separator {
  width: 2px;
  height: 72px;
  margin: 10px 17px 0;
  background: #5c1fc0;
}
</style>
